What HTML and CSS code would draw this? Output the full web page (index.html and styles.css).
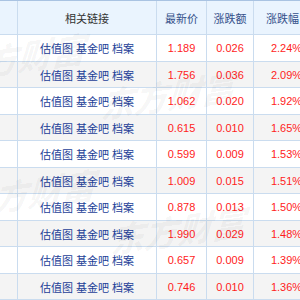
FILE: index.html
```html
<!DOCTYPE html>
<html lang="zh-CN">
<head>
<meta charset="utf-8">
<link rel="stylesheet" href="styles.css">
</head>
<body>
<div class="table">
  <div class="row head">
    <div class="c c0"></div>
    <div class="c c1 th">相关链接</div>
    <div class="c c2 th sort">最新价</div>
    <div class="c c3 th sort">涨跌额</div>
    <div class="c c4 th sort"><span>涨跌幅<span class="arrow"></span></span></div>
  </div>
  <div class="row odd"><div class="c c0"></div><div class="c c1 links"><span><a>估值图</a> <a>基金吧</a> <a>档案</a></span></div><div class="c c2 up">1.189</div><div class="c c3 up">0.026</div><div class="c c4 up">2.24%</div></div>
  <div class="row even"><div class="c c0"></div><div class="c c1 links"><span><a>估值图</a> <a>基金吧</a> <a>档案</a></span></div><div class="c c2 up">1.756</div><div class="c c3 up">0.036</div><div class="c c4 up">2.09%</div></div>
  <div class="row odd"><div class="c c0"></div><div class="c c1 links"><span><a>估值图</a> <a>基金吧</a> <a>档案</a></span></div><div class="c c2 up">1.062</div><div class="c c3 up">0.020</div><div class="c c4 up">1.92%</div></div>
  <div class="row even"><div class="c c0"></div><div class="c c1 links"><span><a>估值图</a> <a>基金吧</a> <a>档案</a></span></div><div class="c c2 up">0.615</div><div class="c c3 up">0.010</div><div class="c c4 up">1.65%</div></div>
  <div class="row odd"><div class="c c0"></div><div class="c c1 links"><span><a>估值图</a> <a>基金吧</a> <a>档案</a></span></div><div class="c c2 up">0.599</div><div class="c c3 up">0.009</div><div class="c c4 up">1.53%</div></div>
  <div class="row even"><div class="c c0"></div><div class="c c1 links"><span><a>估值图</a> <a>基金吧</a> <a>档案</a></span></div><div class="c c2 up">1.009</div><div class="c c3 up">0.015</div><div class="c c4 up">1.51%</div></div>
  <div class="row odd"><div class="c c0"></div><div class="c c1 links"><span><a>估值图</a> <a>基金吧</a> <a>档案</a></span></div><div class="c c2 up">0.878</div><div class="c c3 up">0.013</div><div class="c c4 up">1.50%</div></div>
  <div class="row even"><div class="c c0"></div><div class="c c1 links"><span><a>估值图</a> <a>基金吧</a> <a>档案</a></span></div><div class="c c2 up">1.990</div><div class="c c3 up">0.029</div><div class="c c4 up">1.48%</div></div>
  <div class="row odd"><div class="c c0"></div><div class="c c1 links"><span><a>估值图</a> <a>基金吧</a> <a>档案</a></span></div><div class="c c2 up">0.657</div><div class="c c3 up">0.009</div><div class="c c4 up">1.39%</div></div>
  <div class="row even"><div class="c c0"></div><div class="c c1 links"><span><a>估值图</a> <a>基金吧</a> <a>档案</a></span></div><div class="c c2 up">0.746</div><div class="c c3 up">0.010</div><div class="c c4 up">1.36%</div></div>
  <div class="row odd"><div class="c c0"></div><div class="c c1"></div><div class="c c2"></div><div class="c c3"></div><div class="c c4"></div></div>
</div>
<div class="wm wm1">东方财富</div>
<div class="wm wm2">东方财富</div>
<div class="wm wm3">东方财富</div>
<div class="wm wm4">东方财富</div>
</body>
</html>
```
FILE: styles.css
```css
html, body {
  margin: 0;
  padding: 0;
  width: 300px;
  height: 300px;
  overflow: hidden;
  background: #fff;
  position: relative;
}
.table {
  width: 330px;
  font-family: "Liberation Sans", "Noto Sans CJK SC", sans-serif;
  font-size: 11px;
  border-top: 1px solid #a9c3e2;
}
.row {
  display: flex;
  box-sizing: border-box;
  border-bottom: 1px solid #cadcef;
}
.row.head {
  height: 34px;
  background: #eaf4fe;
}
.row.odd { height: 27px; background: #fff; }
.row.even { height: 26px; background: #f4f4f4; }
.c {
  box-sizing: border-box;
  flex: none;
  border-right: 1px solid #cadcef;
  display: flex;
  align-items: center;
  justify-content: center;
  white-space: nowrap;
}
.c0 { width: 18px; }
.c1 { width: 139px; }
.c2 { width: 50px; }
.c3 { width: 47px; }
.c4 { width: 66px; }
.th { color: #333; font-size: 11px; }
.th.sort { color: #34508a; }
.arrow {
  display: inline-block;
  width: 0;
  height: 0;
  margin-left: 2px;
  vertical-align: 1px;
  border-left: 3px solid transparent;
  border-right: 3px solid transparent;
  border-top: 5px solid #3aa23a;
}
.links a { color: #1d3f98; }
.up { color: #ff1c1c; }
.wm {
  position: absolute;
  font-family: "Noto Sans CJK SC", sans-serif;
  font-weight: 900;
  font-style: italic;
  font-size: 34px;
  color: rgba(0, 0, 0, 0.035);
  transform: rotate(-8deg) skewX(-12deg);
  pointer-events: none;
}
.wm1 { left: -50px; top: 32px; }
.wm2 { left: 100px; top: 70px; }
.wm3 { left: -40px; top: 168px; }
.wm4 { left: 110px; top: 205px; }
```
